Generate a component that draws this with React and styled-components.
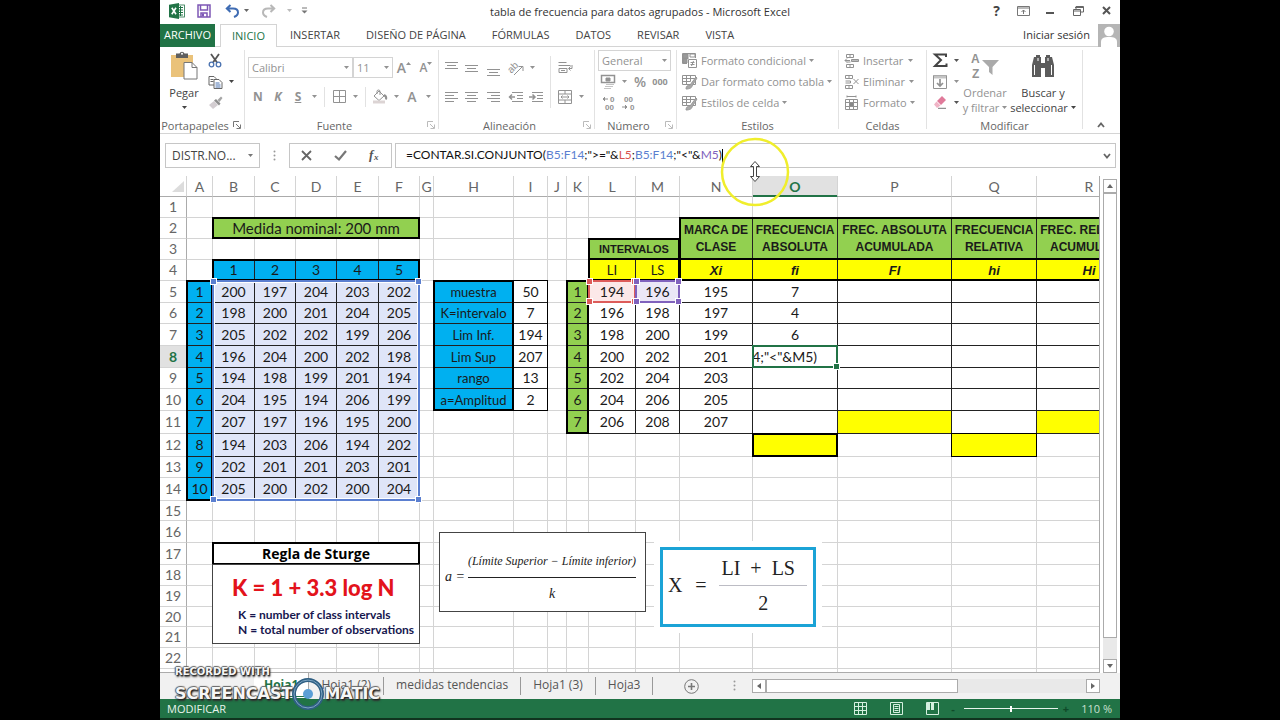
import React from "react";
import styled, { createGlobalStyle, css } from "styled-components";

const UI = `"Open Sans", "Noto Sans", sans-serif`;
const CELL = `Lato, "Open Sans", sans-serif`;
const ARIAL = `"Liberation Sans", Arial, sans-serif`;
const SERIF = `"Liberation Serif", "Times New Roman", serif`;

const color = {
  green: "#217346",
  line: "#d4d4d4",
  frame: "#c6c6c6",
  dim: "#929292",
  text: "#444",
};

const Global = createGlobalStyle`
  * { box-sizing: border-box; }
  body { margin: 0; background: #000; font-family: ${UI}; font-size: 11px; color: ${color.text}; }
  button, input, select { font: inherit; color: inherit; margin: 0; padding: 0; border: 0; background: none; }
`;

/* ---------- shell ---------- */

const Stage = styled.div`
  display: flex;
  justify-content: center;
  min-height: 100vh;
  background: #000;
`;
const Window = styled.main`
  position: relative;
  display: flex;
  flex-direction: column;
  width: 75%;
  height: 100vh;
  min-height: 560px;
  background: #fff;
  overflow: hidden;
`;

/* ---------- title bar ---------- */

const TitleBar = styled.header`
  display: grid;
  grid-template-columns: 1fr auto 1fr;
  align-items: start;
  height: 24px;
  flex: none;
`;
const QuickBar = styled.div`
  display: flex;
  align-items: center;
  height: 21px;
  padding-left: 8px;
`;
const Title = styled.h1`
  margin: 0;
  font-size: 11px;
  line-height: 23px;
  font-weight: 400;
  color: #333;
  white-space: nowrap;
`;
const WindowButtons = styled.div`
  display: flex;
  justify-content: flex-end;
  align-items: center;
  height: 21px;
`;
const Plain = styled.button`
  display: inline-flex;
  align-items: center;
  justify-content: center;
  flex: none;
  width: ${(p) => p.$w || 20}px;
  height: 20px;
`;

/* ---------- ribbon tabs ---------- */

const Tabs = styled.nav`
  display: flex;
  height: 23px;
  flex: none;
  box-shadow: inset 0 -1px ${color.line};
`;
const FileTab = styled.button`
  width: 55px;
  margin-right: 5px;
  padding-bottom: 2px;
  background: ${color.green};
  color: #fff;
`;
const Tab = styled.button`
  padding: 0 13px 2px;
  white-space: nowrap;
  color: #444;
  ${(p) =>
    p.$active &&
    css`
      width: 57px;
      padding: 0 0 2px;
      color: ${color.green};
      background: #fff;
      border: 1px solid ${color.line};
      border-bottom: 0;
    `}
`;
const Account = styled.a`
  display: flex;
  align-items: center;
  gap: 8px;
  margin-left: auto;
  color: #333;
  text-decoration: none;
`;
const AccountName = styled.span`
  padding-bottom: 2px;
`;

/* ---------- ribbon body ---------- */

const Ribbon = styled.section`
  display: flex;
  height: 87px;
  flex: none;
  border-bottom: 1px solid ${color.line};
`;
const Group = styled.div`
  display: flex;
  flex-direction: column;
  flex: none;
  width: ${(p) => p.$w}px;
  padding-top: 3px;
`;
const Divider = styled.div`
  flex: none;
  width: 1px;
  margin: 3px 0 4px;
  background: #e2e2e2;
`;
const Tools = styled.div`
  display: flex;
  flex: 1;
  padding-left: 3px;
  color: ${(p) => (p.$live ? "#444" : color.dim)};
`;
const Stack = styled.div`
  display: flex;
  flex-direction: column;
  gap: ${(p) => p.$gap || 0}px;
  padding-top: ${(p) => p.$top || 0}px;
  padding-left: ${(p) => p.$left || 0}px;
`;
const Line = styled.div`
  display: flex;
  align-items: center;
  height: 21px;
`;
const GroupLabel = styled.div`
  display: flex;
  align-items: center;
  justify-content: center;
  height: 16px;
  color: #666;
`;
const LabelText = styled.span`
  flex: 1;
  text-align: center;
`;
const SmallRule = styled.span`
  width: 1px;
  height: 20px;
  margin: 0 4px;
  background: #e2e2e2;
`;
const TallRule = styled.span`
  width: 1px;
  height: 52px;
  margin: 6px 4px 0;
  background: #e2e2e2;
`;
const Letter = styled.span`
  font-size: ${(p) => p.$size || 12}px;
  font-weight: ${(p) => p.$weight || 700};
  font-style: ${(p) => (p.$italic ? "italic" : "normal")};
  text-decoration: ${(p) => (p.$under ? "underline" : "none")};
`;
const Wide = styled.button`
  display: flex;
  align-items: center;
  gap: 3px;
  height: 21px;
  white-space: nowrap;
`;
const Big = styled.button`
  display: flex;
  flex-direction: column;
  align-items: center;
  width: ${(p) => p.$w}px;
  color: ${(p) => (p.$live ? "#444" : color.dim)};
  line-height: 15px;
  white-space: nowrap;
`;
const BigText = styled.span`
  display: flex;
  align-items: center;
  gap: 3px;
  height: 15px;
`;
const BigIcon = styled.span`
  display: flex;
  align-items: center;
  justify-content: center;
  height: 32px;
  margin-bottom: 3px;
`;
const Combo = styled.label`
  position: relative;
  width: ${(p) => p.$w}px;
  height: 21px;
`;
const Select = styled.select`
  width: 100%;
  height: 100%;
  padding-left: 3px;
  appearance: none;
  border: 1px solid ${color.line};
  color: ${color.dim};
`;
const ComboMark = styled.span`
  position: absolute;
  right: 4px;
  top: 0;
  height: 100%;
  display: flex;
  align-items: center;
  pointer-events: none;
  color: ${color.dim};
`;

/* ---------- formula bar ---------- */

const FormulaRow = styled.div`
  display: flex;
  flex: none;
  height: 42px;
  padding: 9px 4px 8px 5px;
`;
const Field = styled.div`
  display: flex;
  align-items: center;
  height: 25px;
  border: 1px solid ${color.frame};
`;
const NameField = styled(Field)`
  width: 95px;
  padding-left: 6px;
`;
const NameInput = styled.input`
  width: 72px;
  font-size: 12px;
  outline: 0;
`;
const FxField = styled(Field)`
  width: 103px;
  margin-right: 3px;
  justify-content: space-around;
`;
const FormulaField = styled(Field)`
  flex: 1;
  min-width: 0;
  padding-left: 10px;
`;
const FormulaText = styled.div`
  flex: 1;
  font-family: ${CELL};
  font-size: 12px;
  color: #111;
  white-space: nowrap;
  outline: 0;
`;
const Ref = styled.span`
  color: ${(p) => p.$c};
`;
const TextCaret = styled.span`
  display: inline-block;
  width: 1px;
  height: 15px;
  vertical-align: middle;
  background: #000;
`;
const Grip = styled.span`
  display: flex;
  align-items: center;
  justify-content: center;
  width: 29px;
`;

/* ---------- sheet ---------- */

const SheetRow = styled.div`
  display: flex;
  flex: 1;
  min-height: 0;
  background: #fff;
`;
const Sheet = styled.div`
  position: relative;
  flex: 1;
  min-width: 0;
  overflow: hidden;
  border-right: 1px solid #ababab;
  border-bottom: 1px solid #ababab;
`;
const Grid = styled.table`
  table-layout: fixed;
  border-collapse: separate;
  border-spacing: 0;
  font-family: ${CELL};
  font-size: 14px;
  line-height: 18px;
  color: #1a1a1a;
`;
const HeadCell = styled.th`
  padding: ${(p) => (p.$row ? 0 : "2px 0 0")};
  font-weight: ${(p) => (p.$on ? 700 : 400)};
  color: ${(p) => (p.$on ? color.green : "#666")};
  background: ${(p) => (p.$on ? "#e1e1e1" : "#fff")};
  border-right: 1px solid ${(p) => (p.$row ? (p.$on ? color.green : "#ababab") : color.line)};
  border-bottom: 1px solid ${(p) => (p.$row ? color.line : p.$on ? color.green : "#ababab")};
  box-shadow: ${(p) => (p.$on && !p.$row ? `inset 0 -1px ${color.green}` : "none")};
`;
const fills = {
  green: "#92d050",
  blue: "#00b0f0",
  yellow: "#ffff00",
  range: "#dfe5f8",
  red: "#fce8e8",
  purple: "#ebe7f7",
};
const Cell = styled.td`
  padding: 0;
  text-align: center;
  white-space: nowrap;
  background: ${(p) => fills[p.$fill] || "#fff"};
  border-right: 1px solid ${(p) => (p.$boxed ? "#222" : color.line)};
  border-bottom: 1px solid ${(p) => (p.$boxed ? "#222" : color.line)};
  ${(p) =>
    p.$kind === "head" &&
    css`
      font: 700 12px/17px ${ARIAL};
      white-space: pre;
    `}
  ${(p) =>
    p.$kind === "subhead" &&
    css`
      font: 700 11px/17px ${ARIAL};
    `}
  ${(p) =>
    p.$kind === "symbol" &&
    css`
      font: italic 700 13px/17px ${ARIAL};
    `}
  ${(p) =>
    p.$kind === "title" &&
    css`
      font-size: 15px;
    `}
  ${(p) =>
    p.$kind === "label" &&
    css`
      font-size: 13px;
    `}
  ${(p) =>
    p.$kind === "bold" &&
    css`
      font: 700 14px/18px ${UI};
      color: #000;
    `}
`;
const Editing = styled.div`
  display: flex;
  justify-content: flex-end;
  width: 64px;
  overflow: hidden;
`;
const Frame = styled.div`
  position: absolute;
  pointer-events: none;
  border: ${(p) => p.$t || 2}px solid ${(p) => p.$c || "#000"};
  border-top-width: ${(p) => (p.$open ? 0 : p.$t || 2)}px;
  box-shadow: ${(p) => (p.$halo ? "inset 0 0 0 1px #fff" : "none")};
`;
const Handle = styled.i`
  position: absolute;
  width: 5px;
  height: 5px;
  background: ${(p) => p.$c};
  outline: 1px solid #fff;
  ${(p) => (p.$at[0] === "t" ? "top: -3px;" : "bottom: -3px;")}
  ${(p) => (p.$at[1] === "l" ? "left: -3px;" : "right: -3px;")}
`;

const Picture = styled.figure`
  position: absolute;
  margin: 0;
  background: #fff;
`;
const SturgePic = styled(Picture)`
  border: 1px solid #444;
  color: #16164e;
  font: 12px/15px Lato, sans-serif;
  padding: 6px 0 0 19px;
`;
const SturgeMain = styled.div`
  margin-bottom: 2px;
  color: #e3131b;
  font: 900 22px/34px Lato, sans-serif;
  white-space: nowrap;
`;
const SturgeNote = styled.div`
  padding-left: 6px;
  font-weight: 700;
  white-space: nowrap;
`;
const AmplitudePic = styled(Picture)`
  display: flex;
  align-items: center;
  gap: 3px;
  padding: 10px 0 0 5px;
  border: 1px solid #444;
  font: italic 12px/32px ${SERIF};
  color: #222;
  white-space: nowrap;
`;
const MeanPad = styled(Picture)`
  padding: 6px;
`;
const MeanPic = styled.div`
  display: flex;
  align-items: center;
  height: 100%;
  padding: 0 6px 4px 5px;
  justify-content: space-between;
  border: 3px solid #1ba3d6;
  font: 20px/34px ${SERIF};
  color: #222;
  white-space: pre;
`;
const Fraction = styled.span`
  display: flex;
  flex-direction: column;
  align-items: center;
`;
const Over = styled.span`
  padding: 0 ${(p) => p.$right || 0}px 0 ${(p) => p.$left || 0}px;
  border-bottom: 1px solid ${(p) => p.$c || "#222"};
`;
const Term = styled.span`
  font-size: 14px;
`;

/* ---------- scroll bars, sheet tabs, status ---------- */

const VScroll = styled.div`
  display: flex;
  flex-direction: column;
  flex: none;
  width: 20px;
  padding: 3px 3px 0;
`;
const ScrollButton = styled.button`
  display: flex;
  align-items: center;
  justify-content: center;
  flex: none;
  width: 14px;
  height: 14px;
  background: #fff;
  border: 1px solid #ababab;
  color: #666;
`;
const Thumb = styled.div`
  flex: ${(p) => p.$f};
  background: #fff;
  border: 1px solid #ababab;
`;
const Track = styled.div`
  flex: ${(p) => p.$f};
  background: #e9e9e9;
`;
const TabStrip = styled.div`
  display: flex;
  align-items: center;
  flex: none;
  height: 26px;
  padding-left: 94px;
  background: #f1f1f1;
`;
const SheetTab = styled.button`
  height: 18px;
  padding: 0 12px 2px;
  font-size: 12px;
  line-height: 16px;
  color: #555;
  white-space: nowrap;
  border-right: 1px solid #999;
  ${(p) =>
    p.$active &&
    css`
      align-self: stretch;
      height: auto;
      padding: 0 10px;
      color: ${color.green};
      font-weight: 700;
      background: #fff;
      border-right: 1px solid #ababab;
      border-bottom: 3px double ${color.green};
    `}
`;
const HScroll = styled.div`
  display: flex;
  width: 348px;
  height: 14px;
  margin-left: auto;
  margin-right: 20px;
`;
const StripTools = styled.div`
  display: flex;
  align-items: center;
  gap: 32px;
  padding-left: 28px;
`;
const Status = styled.footer`
  display: flex;
  align-items: center;
  flex: none;
  height: 21px;
  padding: 0 8px 0 7px;
  background: ${color.green};
  border-bottom: 2px solid #10341f;
  color: #e8f3ec;
`;
const Views = styled.div`
  display: flex;
  align-items: center;
  gap: 16px;
  margin-left: auto;
  margin-right: 4px;
`;
const Slider = styled.input`
  width: 94px;
  height: 12px;
  margin: 0 4px;
  appearance: none;
  background: linear-gradient(#e8f3ec, #e8f3ec) center / 100% 1px no-repeat;
  &::-webkit-slider-thumb {
    appearance: none;
    width: 2px;
    height: 6px;
    background: #fff;
  }
`;
const ZoomMark = styled.span`
  color: #0f4a29;
  font-weight: 700;
`;
const ZoomText = styled.output`
  width: 42px;
  text-align: right;
  color: #c7e0d0;
`;

/* ---------- recording overlay ---------- */

const Ring = styled.svg`
  position: absolute;
  left: 560px;
  top: 137px;
  pointer-events: none;
`;
const Watermark = styled.div`
  position: absolute;
  left: 15px;
  bottom: 9px;
  pointer-events: none;
  color: #f6f6f6;
  font-family: "DejaVu Sans", sans-serif;
  font-weight: 700;
  text-shadow: 1px 1px 1px #222, -1px 0 1px #555, 0 -1px 1px #666, 1px 2px 2px #333;
`;
const MarkSmall = styled.div`
  font-size: 10px;
  line-height: 10px;
  white-space: nowrap;
`;
const MarkBig = styled.div`
  display: flex;
  align-items: center;
  font-size: 16px;
  line-height: 32px;
`;

/* ---------- icons ---------- */

const Svg = styled.svg`
  flex: none;
  overflow: visible;
`;
const I = ({ w = 16, h = 16, children, ...r }) => (
  <Svg width={w} height={h} viewBox={`0 0 ${w} ${h}`} fill="none" stroke="currentColor" aria-hidden="true" {...r}>
    {children}
  </Svg>
);
const Down = ({ c }) => (
  <svg width="5" height="3" viewBox="0 0 5 3" fill={c || "currentColor"} aria-hidden="true">
    <path d="M0 0h5L2.5 3z" />
  </svg>
);
const Caret = ({ w = 12, label, c }) => (
  <Plain $w={w} aria-label={label}>
    <Down c={c} />
  </Plain>
);
const Lines = ({ rows, o = 0 }) => (
  <I w={14} h={16}>
    {rows.map(([x, l], i) => (
      <path key={i} d={`M${x} ${o + i * 3 + 0.5}h${l}`} />
    ))}
  </I>
);
const ExcelIcon = () => (
  <I w={16} h={16} stroke="none">
    <rect x="8" y="2" width="7.5" height="12" fill="#fff" stroke="#217346" strokeWidth=".8" />
    <path d="M9 4.5h5M9 7h5M9 9.500h5M9 12h5M11.500 3v10" stroke="#217346" strokeWidth="1" />
    <path d="M0 1.800 10 0v16L0 14.200z" fill="#217346" />
    <path d="M2.800 4.800 7 11.200M7 4.800 2.800 11.200" stroke="#fff" strokeWidth="1.600" />
  </I>
);
const SaveIcon = () => (
  <I w={14} h={14} stroke="#7d57b5" strokeWidth="1.500">
    <path d="M1 1h12v12H1z" />
    <path d="M3.500 1v5h7V1M4 13V9h6v4" />
    <path d="M5 9.500h2v3H5z" fill="#7d57b5" stroke="none" />
  </I>
);
const UndoIcon = ({ c, flip }) => (
  <I w={15} h={14} stroke={c} strokeWidth="2">
    <path
      d={
        flip
          ? "M9.500 1l3.700 3.500L9.500 8M13 4.500H7c-3 0-5 1.500-5 4 0 2 1.500 3.500 4 4.500"
          : "M5.500 1 1.800 4.500 5.500 8M2 4.500h6c3 0 5 1.500 5 4 0 2-1.500 3.500-4 4.500"
      }
    />
  </I>
);
const PasteIcon = () => (
  <I w={28} h={30} stroke="none">
    <path d="M1 4h22v22H1z" fill="#eac27a" />
    <path d="M6 2.500h3.500a2.700 2.700 0 0 1 5 0H18V7H6z" fill="#5f5f5f" />
    <circle cx="12" cy="2.800" r="1" fill="#fff" />
    <path d="M14 11.500h8l5 5V28H14z" fill="#fff" stroke="#777" />
    <path d="M22 11.500v5h5" stroke="#777" />
  </I>
);
const CutIcon = () => (
  <I w={14} h={15}>
    <path d="M3 1 9 9.500M11 1 5 9.500" stroke="#555" strokeWidth="1.800" />
    <circle cx="3.500" cy="11.500" r="2.300" stroke="#4a72b0" strokeWidth="1.300" />
    <circle cx="10.500" cy="11.500" r="2.300" stroke="#4a72b0" strokeWidth="1.300" />
  </I>
);
const CopyIcon = () => (
  <I w={15} h={14} stroke="#666">
    <path d="M1 1.500h5l2 2V10H1zM2.500 4.500h3M2.500 6.500h3" />
    <path d="M6 4.500h5l3 3v6H6z" fill="#fff" />
    <path d="M7.500 8h4M7.500 10h5M7.500 12h5" stroke="#4a72b0" />
  </I>
);
const BrushIcon = () => (
  <I w={15} h={14} stroke="none">
    <path d="M1 9 6 5l4 4-5 4z" fill="#d3cdd1" />
    <path d="M6 4.500 8 3l4.500 4.500L11 9.500z" fill="#8f8f8f" />
    <path d="m9.500 4 3.500-3.500 1.500 1.500L11.500 6z" fill="#a5a5a5" />
  </I>
);
const Launcher = ({ dark }) => (
  <I w={8} h={8} stroke={dark ? "#777" : "#bbb"}>
    <path d="M.5 6V.5H6M3 3l4 4M7.500 3.500v4h-4" />
  </I>
);
const BordersIcon = () => (
  <I w={13} h={13}>
    <path d="M.5.5h12v12H.5zM6.500 0v13M0 6.500h13" />
  </I>
);
const BucketIcon = () => (
  <I w={16} h={15}>
    <path d="m2 7 5-5 5 5-5 4.500z" />
    <path d="M5 5V2.500a1.500 1.500 0 0 1 3 0V6" />
    <path d="M12 6c2 1 2.500 3 2 4.500" strokeWidth="2" />
    <path d="M1 13h12" stroke="#dcd4d4" strokeWidth="3" />
  </I>
);
const OrientIcon = () => (
  <I w={17} h={16}>
    <text x="0" y="10" transform="rotate(-45 6 8)" fontSize="10" fontFamily="Liberation Sans" fill="currentColor" stroke="none">
      ab
    </text>
    <path d="m6 15 8.500-8.500M10.500 6.500H15V11" />
  </I>
);
const IndentIcon = ({ out }) => (
  <I w={15} h={12}>
    <path d="M3 1.500h11M8 4.500h6M8 7.500h6M3 10.500h11" />
    <path d={out ? "M0 6h6M3 3.500.5 6 3 8.500" : "M0 6h6M3.500 3.500 6 6 3.500 8.500"} strokeWidth="1.500" />
  </I>
);
const WrapIcon = () => (
  <I w={15} h={14}>
    <path d="M.5 1.500h8M.5 4.500h12M1 7.500h8v4H1zM3 9.500h4" />
    <path d="M14 4v3.500h-3M12.500 5.500l-2 2 2 2" />
  </I>
);
const MergeIcon = () => (
  <I w={14} h={14}>
    <path d="M.5.500h13v13H.5zM.5 4h13M.5 10h13M7 .5V4M7 10v3.500M3 7h8M4.500 5.500 3 7l1.500 1.500M9.500 5.500 11 7 9.500 8.500" />
  </I>
);
const MoneyIcon = () => (
  <I w={15} h={15}>
    <path d="M.5 1.500h13v7H.5z" strokeWidth="1.500" />
    <path d="M5 4h4v3H5z" fill="currentColor" />
    <path d="M5 10.500h8M4 12.500h8M3 14.500h7" stroke="#c4c4c4" />
  </I>
);
const DecIcon = ({ less }) => (
  <I w={15} h={14} stroke="none" fill="currentColor">
    <text x={less ? 3 : 9} y="6" fontSize="8" fontWeight="700" fontFamily="Liberation Sans">{less ? "00" : "0"}</text>
    <text x={less ? 9 : 4} y="14" fontSize="8" fontWeight="700" fontFamily="Liberation Sans">{less ? "0" : "00"}</text>
    <path d={less ? "M1 11h5M4 9l2 2-2 2" : "M7 3H2M4 1 2 3l2 2"} stroke="currentColor" />
  </I>
);
const CondIcon = () => (
  <I w={16} h={16}>
    <path d="M1 1h5v4H1zM1 6h4v4H1z" fill="#999" />
    <path d="M8 1h5v3H8zM.5.500h13V5M.5 5.500h6M.5.500v10H5" />
    <path d="M6.500 6.500h8v8h-8z" fill="#fff" />
    <path d="M8.500 9.500h4M8.500 11.500h4M11.500 8l-2 5" />
  </I>
);
const FormatIcon = () => (
  <I w={16} h={16}>
    <path d="M.5 1.500h13v9H.5zM.5 4.500h13M.5 7.500h8M4.500 1.500v9M8.500 1.500v6" />
    <path d="M4 15c0-3 2-4 4-4l6-8 1 1-5 8c0 2-3 3-6 3z" fill="#aaa" stroke="#999" />
  </I>
);
const InsertIcon = () => (
  <I w={16} h={16}>
    <path d="M2.500 1.500h7v3h-7zM6 1.500v3M2.500 11.500h7v3h-7zM6 11.500v3M2.500 9h4" />
    <path d="M7.500 6.500h7v2h-7z" fill="#bbb" />
    <path d="M1 7.500h5M3 5.500l-2 2 2 2" />
  </I>
);
const DeleteIcon = () => (
  <I w={16} h={16}>
    <path d="M1.500 1.500h7v3h-7zM5 1.500v3M1.500 11.500h7v3h-7zM5 11.500v3M1.500 7h5v2h-5" />
    <path d="m9.500 5 5 5M14.500 5l-5 5" />
  </I>
);
const CellFmtIcon = () => (
  <I w={16} h={16}>
    <path d="M1.500 4.500h12v10h-12zM1.500 7.500h12M1.500 11.500h12M5.500 4.500v10M9.500 4.500v10M3 .5v2M12 .5v2M3 1.500h9" />
    <path d="M5.500 7.500h4v4h-4z" fill="#888" />
  </I>
);
const SigmaIcon = () => (
  <I w={15} h={15} stroke="#444" strokeWidth="2">
    <path d="M13 4V1.500H2L8 7l-6 6h11.500V10.500" />
  </I>
);
const FillIcon = () => (
  <I w={14} h={14}>
    <path d="M.5.500h13v13H.5z" />
    <path d="M1 2h12" strokeWidth="3" stroke="#c4c4c4" />
    <path d="M7 4v7M4 8l3 3 3-3" strokeWidth="1.700" />
  </I>
);
const EraserIcon = () => (
  <I w={14} h={13} stroke="none">
    <path d="M4 5 9 0l4 4-5 5z" fill="#e07a9a" />
    <path d="M3.500 5.500 1 8.500 4 12l3.500-2.500z" fill="#f0b4c6" />
    <path d="M5 12.300h8" stroke="#777" />
  </I>
);
const SortIcon = () => (
  <I w={28} h={26} stroke="none" fill="currentColor">
    <text x="0" y="10" fontSize="12" fontWeight="700" fontFamily="Liberation Sans">A</text>
    <text x="1" y="25" fontSize="12" fontWeight="700" fontFamily="Liberation Sans">Z</text>
    <path d="M11 7h17l-6.500 7v8l-3.500-3v-5z" fill="#aaa" />
  </I>
);
const BinocularsIcon = () => (
  <I w={26} h={24} stroke="none" fill="#5c5c5c">
    <path d="M4 3h2V1h4v2h1v6h4V3h1V1h4v2h2l2 8v12h-9v-9h-4v9H2V11z" />
    <path d="M4.500 11v10M21.500 11v10M8 4v3M18 4v3" stroke="#fff" />
  </I>
);
const Chev = ({ up }) => (
  <I w={8} h={6} strokeWidth="1.800" stroke="#666">
    <path d={up ? "m1 5 3-3.500L7 5" : "m1 1 3 3.500L7 1"} />
  </I>
);
const Arrow = ({ d }) => (
  <I w={6} h={6} stroke="none" fill="currentColor">
    <path d={{ up: "M0 5h6L3 1z", down: "M0 1h6L3 5z", left: "M5 0v6L1 3z", right: "M1 0v6l4-3z" }[d]} />
  </I>
);
const Dots = () => (
  <I w={3} h={12} stroke="none" fill="#999">
    <circle cx="1.500" cy="1.500" r="1" />
    <circle cx="1.500" cy="5.500" r="1" />
    <circle cx="1.500" cy="9.500" r="1" />
  </I>
);

/* ---------- sheet data ---------- */

const HEAD_W = 27;
const HEAD_H = 21;
const cols = [
  ["A", 26], ["B", 42], ["C", 41], ["D", 41], ["E", 42], ["F", 41], ["G", 14], ["H", 80], ["I", 34],
  ["J", 19], ["K", 22], ["L", 47], ["M", 44], ["N", 73], ["O", 85], ["P", 114], ["Q", 85], ["R", 105],
];
const rows = [21, 21, 21, 21, 22, 21, 22, 22, 21, 22, 23, 23, 21, 23, 20, 22, 22, 21, 21, 20, 21, 21, 21];
const letters = cols.map((c) => c[0]);
const sum = (a) => a.reduce((s, n) => s + n, 0);
const colX = (i) => HEAD_W + sum(cols.slice(0, i).map((c) => c[1]));
const rowY = (i) => HEAD_H + sum(rows.slice(0, i));

/* Pixel box of a range such as "B5:F14", including its leading grid lines. */
const boxOf = (range) => {
  const [a, b = a] = range.split(":");
  const left = colX(letters.indexOf(a[0])) - 1;
  const top = rowY(Number(a.slice(1)) - 1) - 1;
  return {
    left,
    top,
    width: colX(letters.indexOf(b[0]) + 1) - left,
    height: rowY(Number(b.slice(1))) - top,
  };
};

const cells = {};
const put = (start, table, props = {}) => {
  const c0 = letters.indexOf(start[0]);
  const r0 = Number(start.slice(1));
  table.forEach((row, r) =>
    row.forEach((v, c) => {
      cells[letters[c0 + c] + (r0 + r)] = { v, boxed: true, ...props };
    })
  );
};
const column = (list) => list.map((v) => [v]);

put("B4", [[1, 2, 3, 4, 5]], { fill: "blue" });
put("A5", column([1, 2, 3, 4, 5, 6, 7, 8, 9, 10]), { fill: "blue" });
put("B5", [
  [200, 197, 204, 203, 202],
  [198, 200, 201, 204, 205],
  [205, 202, 202, 199, 206],
  [196, 204, 200, 202, 198],
  [194, 198, 199, 201, 194],
  [204, 195, 194, 206, 199],
  [207, 197, 196, 195, 200],
  [194, 203, 206, 194, 202],
  [202, 201, 201, 203, 201],
  [205, 200, 202, 200, 204],
], { fill: "range" });
put("H5", column(["muestra", "K=intervalo", "Lim Inf.", "Lim Sup", "rango", "a=Amplitud"]), { fill: "blue", kind: "label" });
put("I5", column([50, 7, 194, 207, 13, 2]));
put("K5", column([1, 2, 3, 4, 5, 6, 7]), { fill: "green" });
put("L4", [["LI", "LS"]], { fill: "yellow", kind: "label" });
put("N4", [["Xi", "fi", "FI", "hi", "Hi"]], { fill: "yellow", kind: "symbol" });
put("L5", [
  [194, 196, 195, 7, "", "", ""],
  [196, 198, 197, 4, "", "", ""],
  [198, 200, 199, 6, "", "", ""],
  [200, 202, 201, "", "", "", ""],
  [202, 204, 203, "", "", "", ""],
  [204, 206, 205, "", "", "", ""],
  [206, 208, 207, "", "", "", ""],
]);
Object.assign(cells.L5, { fill: "red" });
Object.assign(cells.M5, { fill: "purple" });
Object.assign(cells.P11, { fill: "yellow" });
Object.assign(cells.R11, { fill: "yellow" });
put("O12", [[""]], { fill: "yellow" });
put("Q12", [[""]], { fill: "yellow" });
cells.O8.edit = true;

const merge = (range, v, props) => {
  const [a, b] = range.split(":");
  const c0 = letters.indexOf(a[0]);
  const c1 = letters.indexOf(b[0]);
  const r0 = Number(a.slice(1));
  const r1 = Number(b.slice(1));
  for (let r = r0; r <= r1; r++) for (let c = c0; c <= c1; c++) cells[letters[c] + r] = { skip: true };
  cells[a] = { v, boxed: true, colSpan: c1 - c0 + 1, rowSpan: r1 - r0 + 1, ...props };
};
merge("B2:F2", "Medida nominal: 200 mm", { fill: "green", kind: "title" });
merge("L3:M3", "INTERVALOS", { fill: "green", kind: "subhead" });
merge("N2:N3", "MARCA DE\nCLASE", { fill: "green", kind: "head" });
merge("O2:O3", "FRECUENCIA\nABSOLUTA", { fill: "green", kind: "head" });
merge("P2:P3", "FREC. ABSOLUTA\nACUMULADA", { fill: "green", kind: "head" });
merge("Q2:Q3", "FRECUENCIA\nRELATIVA", { fill: "green", kind: "head" });
merge("R2:R3", "FREC. RELATIVA\nACUMULADA", { fill: "green", kind: "head" });
merge("B17:F17", "Regla de Sturge", { kind: "bold" });

/* Range, thickness, and whether the top edge is shared with the frame above. */
const outlines = [
  ["B2:F2"], ["B4:F4"], ["A5:A14"], ["H5:H10"], ["I5:I10", 1], ["K5:K11"], ["L3:M3"], ["L4:M4", 2, true],
  ["N2:R3"], ["N4:R4", 2, true], ["O12:O12"], ["Q12:Q12", 1], ["B17:F17"],
];
const blue = "#5b7fd0";
const marks = [
  ["B5:F14", blue, true],
  ["L5:L5", "#dd5c5a", false],
  ["M5:M5", "#8062bd", false],
];

function SheetGrid() {
  return (
    <Sheet>
      <Grid style={{ width: colX(cols.length) }}>
        <colgroup>
          <col style={{ width: HEAD_W }} />
          {cols.map(([n, w]) => (
            <col key={n} style={{ width: w }} />
          ))}
        </colgroup>
        <thead>
          <tr style={{ height: HEAD_H }}>
            <HeadCell aria-label="Seleccionar todo">
              <svg width="12" height="12" viewBox="0 0 12 12" style={{ display: "block", marginLeft: 12 }} aria-hidden="true">
                <path d="M12 0v11H0z" fill="#dcdcdc" />
              </svg>
            </HeadCell>
            {letters.map((l) => (
              <HeadCell key={l} scope="col" $on={l === "O"}>{l}</HeadCell>
            ))}
          </tr>
        </thead>
        <tbody>
          {rows.map((h, i) => (
            <tr key={i} style={{ height: h }}>
              <HeadCell scope="row" $row $on={i === 7}>{i < 22 ? i + 1 : null}</HeadCell>
              {letters.map((l) => {
                const c = cells[l + (i + 1)] || {};
                if (c.skip) return null;
                return (
                  <Cell key={l} colSpan={c.colSpan} rowSpan={c.rowSpan} $fill={c.fill} $kind={c.kind} $boxed={c.boxed}>
                    {c.edit ? <Editing>4;"&lt;"&amp;M5)</Editing> : c.v}
                  </Cell>
                );
              })}
            </tr>
          ))}
        </tbody>
      </Grid>

      {outlines.map(([r, t, open]) => (
        <Frame key={r} $t={t} $open={open} style={boxOf(r)} />
      ))}
      {marks.map(([r, c, halo]) => (
        <Frame key={r} $c={c} $halo={halo} style={boxOf(r)}>
          {["tl", "tr", "bl", "br"].map((at) => (
            <Handle key={at} $at={at} $c={c} />
          ))}
        </Frame>
      ))}
      <Frame $c={color.green} style={boxOf("O8:O8")}>
        <Handle $at="br" $c={color.green} />
      </Frame>

      <SturgePic style={{ ...boxOf("B18:F21"), height: 80 }}>
        <SturgeMain>K = 1 + 3.3 log N</SturgeMain>
        <SturgeNote>K = number of class intervals</SturgeNote>
        <SturgeNote>N = total number of observations</SturgeNote>
      </SturgePic>
      <AmplitudePic style={{ left: 279, top: 356, width: 207, height: 80 }}>
        <Term>a =</Term>
        <Fraction>
          <Over>(Límite Superior − Límite inferior)</Over>
          <Term>k</Term>
        </Fraction>
      </AmplitudePic>
      <MeanPad style={{ left: 494, top: 365, width: 168, height: 92 }}>
        <MeanPic>
          <span>X</span>
          <span>=</span>
          <Fraction>
            <Over $left={2} $right={12} $c="#bcbcc4">LI  +  LS</Over>
            <span>2</span>
          </Fraction>
        </MeanPic>
      </MeanPad>
    </Sheet>
  );
}

const StyleRow = ({ icon, text }) => (
  <Wide>
    {icon}
    {text}
    <Down />
  </Wide>
);

export default function App() {
  return (
    <Stage>
      <Global />
      <Window>
        <TitleBar>
          <QuickBar>
            <Plain $w={18} aria-label="Excel"><ExcelIcon /></Plain>
            <Plain $w={36} aria-label="Guardar"><SaveIcon /></Plain>
            <Plain $w={20} aria-label="Deshacer"><UndoIcon c="#3f6cb3" /></Plain>
            <Caret w={9} label="Opciones de deshacer" c="#666" />
            <Plain $w={34} aria-label="Rehacer"><UndoIcon c="#b8b8b8" flip /></Plain>
            <Caret w={9} label="Opciones de rehacer" c="#bbb" />
            <Plain $w={20} aria-label="Personalizar">
              <I w={7} h={7} stroke="#777"><path d="M1 1h5" /><path d="M.500 3.500h6l-3 3z" fill="#777" stroke="none" /></I>
            </Plain>
          </QuickBar>
          <Title>tabla de frecuencia para datos agrupados - Microsoft Excel</Title>
          <WindowButtons>
            <Plain $w={27} aria-label="Ayuda"><Letter $size={14}>?</Letter></Plain>
            <Plain $w={27} aria-label="Opciones de la cinta">
              <I w={13} h={10} stroke="#777"><path d="M.500.500h12v9H.500zM0 2h13M6.500 8V4M4.500 6l2-2 2 2" /></I>
            </Plain>
            <Plain $w={27} aria-label="Minimizar"><I w={9} h={6} strokeWidth="2" stroke="#555"><path d="M0 5h8" /></I></Plain>
            <Plain $w={28} aria-label="Restaurar">
              <I w={11} h={10} stroke="#666"><path d="M3 3V.500h7.500V6H8" /><path d="M2 1.500h8" /><path d="M.500 3.500h7v6h-7zM.500 5h7" /></I>
            </Plain>
            <Plain $w={28} aria-label="Cerrar"><I w={9} h={9} strokeWidth="2" stroke="#555"><path d="m1 1 7 7M8 1 1 8" /></I></Plain>
          </WindowButtons>
        </TitleBar>

        <Tabs>
          <FileTab>ARCHIVO</FileTab>
          <Tab $active>INICIO</Tab>
          <Tab>INSERTAR</Tab>
          <Tab>DISEÑO DE PÁGINA</Tab>
          <Tab>FÓRMULAS</Tab>
          <Tab>DATOS</Tab>
          <Tab>REVISAR</Tab>
          <Tab>VISTA</Tab>
          <Account href="#sesion">
            <AccountName>Iniciar sesión</AccountName>
            <svg width="22" height="23" viewBox="0 0 22 23" aria-hidden="true">
              <path d="M0 0h22v23H0z" fill="#b5b5b5" />
              <circle cx="11" cy="7.500" r="4.800" fill="#fff" />
              <path d="M3 23v-5c0-4 3-5 8-5s8 1 8 5v5z" fill="#fff" />
            </svg>
          </Account>
        </Tabs>

        <Ribbon>
          <Group $w={84}>
            <Tools $live>
              <Big $w={42} $live>
                <BigIcon><PasteIcon /></BigIcon>
                <BigText>Pegar</BigText>
                <BigText><Down /></BigText>
              </Big>
              <Stack>
                <Line><Plain aria-label="Cortar"><CutIcon /></Plain></Line>
                <Line><Plain aria-label="Copiar"><CopyIcon /></Plain><Caret label="Opciones de copiar" /></Line>
                <Line><Plain aria-label="Copiar formato"><BrushIcon /></Plain></Line>
              </Stack>
            </Tools>
            <GroupLabel><LabelText>Portapapeles</LabelText><Plain $w={14} aria-label="Más portapapeles"><Launcher dark /></Plain></GroupLabel>
          </Group>
          <Divider />
          <Group $w={193}>
            <Tools>
              <Stack $top={7} $gap={8}>
                <Line>
                  <Combo $w={105}>
                    <Select aria-label="Fuente" defaultValue="Calibri"><option>Calibri</option></Select>
                    <ComboMark><Down /></ComboMark>
                  </Combo>
                  <Combo $w={40}>
                    <Select aria-label="Tamaño" defaultValue="11"><option>11</option></Select>
                    <ComboMark><Down /></ComboMark>
                  </Combo>
                  <Plain $w={22} aria-label="Aumentar fuente"><Letter $size={14} $weight={600}>A</Letter><I w={5} h={12} stroke="none" fill="currentColor"><path d="M0 3h5L2.500 0z" /></I></Plain>
                  <Plain $w={22} aria-label="Reducir fuente"><Letter $size={12} $weight={600}>A</Letter><I w={5} h={12} stroke="none" fill="currentColor"><path d="M0 0h5L2.500 3z" /></I></Plain>
                </Line>
                <Line>
                  <Plain aria-label="Negrita"><Letter>N</Letter></Plain>
                  <Plain aria-label="Cursiva"><Letter $italic>K</Letter></Plain>
                  <Plain aria-label="Subrayado"><Letter $under>S</Letter></Plain>
                  <Caret label="Opciones de subrayado" />
                  <SmallRule />
                  <Plain aria-label="Bordes"><BordersIcon /></Plain>
                  <Caret label="Opciones de bordes" />
                  <SmallRule />
                  <Plain aria-label="Color de relleno"><BucketIcon /></Plain>
                  <Caret label="Opciones de relleno" />
                  <Plain aria-label="Color de fuente"><Letter $size={14} $weight={600}>A</Letter></Plain>
                  <Caret label="Opciones de color" />
                </Line>
              </Stack>
            </Tools>
            <GroupLabel><LabelText>Fuente</LabelText><Plain $w={14} aria-label="Más fuente"><Launcher /></Plain></GroupLabel>
          </Group>
          <Divider />
          <Group $w={155}>
            <Tools>
              <Stack $top={7} $gap={8}>
                <Line>
                  <Plain aria-label="Alinear arriba"><Lines rows={[[0, 13], [2, 9], [0, 13]]} o={2} /></Plain>
                  <Plain aria-label="Alinear al medio"><Lines rows={[[0, 13], [2, 9], [0, 13]]} o={5} /></Plain>
                  <Plain $w={24} aria-label="Alinear abajo"><Lines rows={[[0, 13], [2, 9], [0, 13]]} o={9} /></Plain>
                  <Plain aria-label="Orientación"><OrientIcon /></Plain>
                  <Caret label="Opciones de orientación" />
                </Line>
                <Line>
                  <Plain aria-label="Alinear a la izquierda"><Lines rows={[[0, 13], [0, 9], [0, 13], [0, 9]]} o={3} /></Plain>
                  <Plain aria-label="Centrar"><Lines rows={[[0, 13], [2, 9], [0, 13], [2, 9]]} o={3} /></Plain>
                  <Plain $w={24} aria-label="Alinear a la derecha"><Lines rows={[[0, 13], [4, 9], [0, 13], [4, 9]]} o={3} /></Plain>
                  <Plain aria-label="Disminuir sangría"><IndentIcon out /></Plain>
                  <Plain aria-label="Aumentar sangría"><IndentIcon /></Plain>
                </Line>
              </Stack>
              <TallRule />
              <Stack $top={7} $gap={8}>
                <Line><Plain aria-label="Ajustar texto"><WrapIcon /></Plain></Line>
                <Line><Plain aria-label="Combinar y centrar"><MergeIcon /></Plain><Caret label="Opciones de combinar" /></Line>
              </Stack>
            </Tools>
            <GroupLabel><LabelText>Alineación</LabelText><Plain $w={14} aria-label="Más alineación"><Launcher /></Plain></GroupLabel>
          </Group>
          <Divider />
          <Group $w={81}>
            <Tools>
              <Stack>
                <Line>
                  <Combo $w={73}>
                    <Select aria-label="Formato de número" defaultValue="General"><option>General</option></Select>
                    <ComboMark><Down /></ComboMark>
                  </Combo>
                </Line>
                <Line>
                  <Plain aria-label="Moneda"><MoneyIcon /></Plain>
                  <Caret label="Opciones de moneda" />
                  <Plain aria-label="Porcentaje"><Letter $size={14} $weight={600}>%</Letter></Plain>
                  <Plain aria-label="Millares"><Letter $size={9}>000</Letter></Plain>
                </Line>
                <Line>
                  <Plain aria-label="Aumentar decimales"><DecIcon /></Plain>
                  <Plain aria-label="Disminuir decimales"><DecIcon less /></Plain>
                </Line>
              </Stack>
            </Tools>
            <GroupLabel><LabelText>Número</LabelText><Plain $w={14} aria-label="Más número"><Launcher /></Plain></GroupLabel>
          </Group>
          <Divider />
          <Group $w={161}>
            <Tools>
              <Stack $left={2}>
                <StyleRow icon={<CondIcon />} text="Formato condicional" />
                <StyleRow icon={<FormatIcon />} text="Dar formato como tabla" />
                <StyleRow icon={<FormatIcon />} text="Estilos de celda" />
              </Stack>
            </Tools>
            <GroupLabel><LabelText>Estilos</LabelText></GroupLabel>
          </Group>
          <Divider />
          <Group $w={87}>
            <Tools>
              <Stack $left={2}>
                <Line><Wide><InsertIcon />Insertar</Wide><Caret w={14} label="Opciones de insertar" /></Line>
                <Line><Wide><DeleteIcon />Eliminar</Wide><Caret w={14} label="Opciones de eliminar" /></Line>
                <Line><StyleRow icon={<CellFmtIcon />} text="Formato" /></Line>
              </Stack>
            </Tools>
            <GroupLabel><LabelText>Celdas</LabelText></GroupLabel>
          </Group>
          <Divider />
          <Group $w={155}>
            <Tools>
              <Stack>
                <Line><Plain aria-label="Autosuma"><SigmaIcon /></Plain><Caret label="Opciones de suma" c="#555" /></Line>
                <Line><Plain aria-label="Rellenar"><FillIcon /></Plain><Caret label="Opciones de rellenar" /></Line>
                <Line><Plain aria-label="Borrar"><EraserIcon /></Plain><Caret label="Opciones de borrar" c="#555" /></Line>
              </Stack>
              <Big $w={46}>
                <BigIcon><SortIcon /></BigIcon>
                <BigText>Ordenar</BigText>
                <BigText>y filtrar <Down /></BigText>
              </Big>
              <Big $w={70} $live>
                <BigIcon><BinocularsIcon /></BigIcon>
                <BigText>Buscar y</BigText>
                <BigText>seleccionar <Down /></BigText>
              </Big>
            </Tools>
            <GroupLabel><LabelText>Modificar</LabelText></GroupLabel>
          </Group>
          <Divider />
          <Group $w={36}>
            <Tools />
            <GroupLabel><Plain $w={14} aria-label="Contraer la cinta"><Chev up /></Plain></GroupLabel>
          </Group>
        </Ribbon>

        <FormulaRow>
          <NameField>
            <NameInput aria-label="Cuadro de nombres" defaultValue="DISTR.NO..." />
            <Caret label="Lista de nombres" c="#777" />
          </NameField>
          <Grip><Dots /></Grip>
          <FxField>
            <Plain aria-label="Cancelar"><I w={11} h={11} strokeWidth="1.800" stroke="#666"><path d="m1 1 9 9M10 1 1 10" /></I></Plain>
            <Plain aria-label="Introducir"><I w={13} h={11} strokeWidth="2.200" stroke="#777"><path d="m1 6 4 3.500L12 1" /></I></Plain>
            <Plain aria-label="Insertar función">
              <I w={14} h={15} stroke="none" fill="#555">
                <text x="2" y="11" fontSize="13" fontStyle="italic" fontWeight="700" fontFamily="Liberation Serif">f</text>
                <text x="7" y="12" fontSize="9" fontStyle="italic" fontWeight="700" fontFamily="Liberation Serif">x</text>
              </I>
            </Plain>
          </FxField>
          <FormulaField>
            <FormulaText role="textbox" aria-label="Barra de fórmulas" contentEditable suppressContentEditableWarning>
              =CONTAR.SI.CONJUNTO(<Ref $c={blue}>B5:F14</Ref>;"&gt;="&amp;<Ref $c="#d9534f">L5</Ref>;<Ref $c={blue}>B5:F14</Ref>;"&lt;"&amp;<Ref $c="#8062bd">M5</Ref>)<TextCaret />
            </FormulaText>
            <Plain $w={16} aria-label="Expandir"><Chev /></Plain>
          </FormulaField>
        </FormulaRow>

        <SheetRow>
          <SheetGrid />
          <VScroll>
            <ScrollButton aria-label="Subir"><Arrow d="up" /></ScrollButton>
            <Thumb $f={445} />
            <Track $f={21} />
            <ScrollButton aria-label="Bajar"><Arrow d="down" /></ScrollButton>
          </VScroll>
        </SheetRow>

        <TabStrip>
          <SheetTab $active>Hoja1</SheetTab>
          <SheetTab>Hoja1 (2)</SheetTab>
          <SheetTab>medidas tendencias</SheetTab>
          <SheetTab>Hoja1 (3)</SheetTab>
          <SheetTab>Hoja3</SheetTab>
          <StripTools>
            <Plain aria-label="Hoja nueva">
              <I w={15} h={15} stroke="#777"><circle cx="7.500" cy="7.500" r="6.800" /><path d="M7.500 4v7M4 7.500h7" strokeWidth="1.600" /></I>
            </Plain>
            <Dots />
          </StripTools>
          <HScroll>
            <ScrollButton aria-label="Izquierda"><Arrow d="left" /></ScrollButton>
            <Thumb $f={191} />
            <Track $f={129} />
            <ScrollButton aria-label="Derecha"><Arrow d="right" /></ScrollButton>
          </HScroll>
        </TabStrip>

        <Status>
          MODIFICAR
          <Views>
            <Plain aria-label="Normal"><I w={13} h={13} stroke="#d5f0e0"><path d="M.500.500h12v12H.500zM4.500 0v13M8.500 0v13M0 4.500h13M0 8.500h13" /></I></Plain>
            <Plain aria-label="Diseño de página"><I w={13} h={13} stroke="#d5f0e0"><path d="M.500.500h12v12H.500zM3.500 2.500h6v8h-6zM4.500 4.500h4M4.500 6.500h4M4.500 8.500h4" /></I></Plain>
            <Plain aria-label="Salto de página"><I w={13} h={13} stroke="#d5f0e0"><path d="M.500.500h12v12H.500z" /><path d="M1 1h3v7H1zM5 1h3v7H5z" fill="#d5f0e0" stroke="none" /></I></Plain>
          </Views>
          <Plain $w={14} aria-label="Alejar"><ZoomMark>-</ZoomMark></Plain>
          <Slider type="range" aria-label="Zoom" min="0" max="100" defaultValue="50" />
          <Plain $w={8} aria-label="Acercar"><ZoomMark>+</ZoomMark></Plain>
          <ZoomText>110 %</ZoomText>
        </Status>

        <Ring width="70" height="70" viewBox="0 0 70 70" fill="none" aria-hidden="true">
          <circle cx="35" cy="35" r="33" stroke="#f0ee2c" strokeWidth="2.500" />
          <path d="m35 24.500 4.500 5H36.500v10H39.500l-4.500 5-4.500-5h3v-10h-3z" fill="#fff" stroke="#444" />
        </Ring>
        <Watermark>
          <MarkSmall>RECORDED WITH</MarkSmall>
          <MarkBig>
            SCREENCAST
            <svg width="32" height="34" viewBox="0 0 32 34" fill="none" aria-hidden="true">
              <circle cx="16" cy="17" r="14" stroke="#2f5f83" strokeWidth="4" />
              <circle cx="16" cy="17" r="14" stroke="#7ea6c4" strokeWidth="1" />
              <circle cx="16" cy="17" r="5" fill="#5b9fd6" />
            </svg>
            MATIC
          </MarkBig>
        </Watermark>
      </Window>
    </Stage>
  );
}
